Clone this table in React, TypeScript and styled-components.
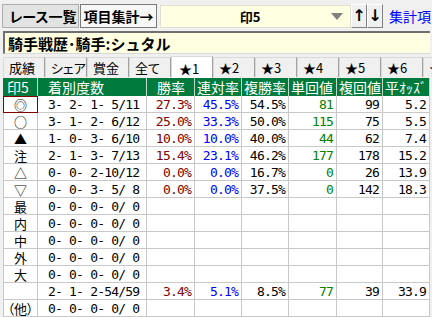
import React from 'react';
import styled, { createGlobalStyle } from 'styled-components';

const GlobalStyle = createGlobalStyle`
  html, body {
    margin: 0;
    padding: 0;
    background: #f0f0f0;
  }
  body {
    font-family: "Noto Sans CJK JP", "DejaVu Sans", sans-serif;
  }
`;

type Row = {
  mark: string;
  count: string;
  win?: string;
  ren?: string;
  fuku?: string;
  tan?: string;
  fukuKai?: string;
  odds?: string;
};

const rows: Row[] = [
  { mark: '◎', count: '3- 2- 1- 5/11', win: '27.3%', ren: '45.5%', fuku: '54.5%', tan: '81', fukuKai: '99', odds: '5.2' },
  { mark: '○', count: '3- 1- 2- 6/12', win: '25.0%', ren: '33.3%', fuku: '50.0%', tan: '115', fukuKai: '75', odds: '5.5' },
  { mark: '▲', count: '1- 0- 3- 6/10', win: '10.0%', ren: '10.0%', fuku: '40.0%', tan: '44', fukuKai: '62', odds: '7.4' },
  { mark: '注', count: '2- 1- 3- 7/13', win: '15.4%', ren: '23.1%', fuku: '46.2%', tan: '177', fukuKai: '178', odds: '15.2' },
  { mark: '△', count: '0- 0- 2-10/12', win: '0.0%', ren: '0.0%', fuku: '16.7%', tan: '0', fukuKai: '26', odds: '13.9' },
  { mark: '▽', count: '0- 0- 3- 5/ 8', win: '0.0%', ren: '0.0%', fuku: '37.5%', tan: '0', fukuKai: '142', odds: '18.3' },
  { mark: '最', count: '0- 0- 0- 0/ 0' },
  { mark: '内', count: '0- 0- 0- 0/ 0' },
  { mark: '中', count: '0- 0- 0- 0/ 0' },
  { mark: '外', count: '0- 0- 0- 0/ 0' },
  { mark: '大', count: '0- 0- 0- 0/ 0' },
  { mark: '', count: '2- 1- 2-54/59', win: '3.4%', ren: '5.1%', fuku: '8.5%', tan: '77', fukuKai: '39', odds: '33.9' },
  { mark: '（他）', count: '0- 0- 0- 0/ 0' },
];

const tabs = ['成績', 'シェア', '賞金', '全て', '★1', '★2', '★3', '★4', '★5', '★6', '★'];
// header label and its left padding
const heads: [string, number][] = [
  ['印5', 4],
  ['着別度数', 10],
  ['勝率', 10],
  ['連対率', 2],
  ['複勝率', 2],
  ['単回値', 2],
  ['複回値', 2],
  ['平ｵｯｽﾞ', 2],
];

const App: React.FC = () => (
  <Screen>
    <GlobalStyle />
    <Toolbar>
      <ToolButton>レース一覧</ToolButton>
      <ToolButton pressed>項目集計→</ToolButton>
      <Combo>
        <ComboText>印5</ComboText>
        <ComboArrow />
      </Combo>
      <ArrowButton>↑</ArrowButton>
      <ArrowButton>↓</ArrowButton>
      <LinkText>集計項目</LinkText>
    </Toolbar>
    <TitleBox>騎手戦歴･騎手:シュタル</TitleBox>
    <TabStrip>
      {tabs.map((t, i) => (
        <Tab key={i} active={i === 4}>{t}</Tab>
      ))}
    </TabStrip>
    <Grid>
      {heads.map(([h, pad]) => (
        <HeadCell key={h} pad={pad}>{h}</HeadCell>
      ))}
      {rows.map((r, i) => (
        <React.Fragment key={i}>
          <MarkCell selected={i === 0}>{r.mark}</MarkCell>
          <CountCell>{r.count}</CountCell>
          <NumCell color="#800000">{r.win}</NumCell>
          <NumCell color="#0000ff">{r.ren}</NumCell>
          <NumCell>{r.fuku}</NumCell>
          <NumCell color="#008000">{r.tan}</NumCell>
          <NumCell>{r.fukuKai}</NumCell>
          <NumCell>{r.odds}</NumCell>
        </React.Fragment>
      ))}
    </Grid>
  </Screen>
);
export default App;

const Screen = styled.div`
  width: 432px;
  height: 317px;
  overflow: hidden;
  background: #f0f0f0;
`;

const Toolbar = styled.div`
  display: flex;
  align-items: center;
  height: 24px;
  padding: 4px 0 0 2px;
  & > * {
    flex-shrink: 0;
  }
`;

const ToolButton = styled.div<{ pressed?: boolean }>`
  box-sizing: border-box;
  width: 77px;
  height: 24px;
  margin-right: ${(p) => (p.pressed ? '3px' : '1px')};
  display: flex;
  align-items: center;
  justify-content: center;
  padding-left: ${(p) => (p.pressed ? '0' : '5px')};
  font-size: 14px;
  line-height: 1;
  font-weight: bold;
  font-feature-settings: "palt";
  color: #000;
  background: ${(p) => (p.pressed ? '#f7f7f7' : '#e3e3e3')};
  border: 1px solid ${(p) => (p.pressed ? '#7a7a7a' : '#adadad')};
`;

const Combo = styled.div`
  box-sizing: border-box;
  width: 191px;
  height: 23px;
  display: flex;
  align-items: center;
  background: #ffffe1;
  border: 1px solid #e0e0d0;
`;

const ComboText = styled.div`
  flex: 1;
  text-align: center;
  font-size: 13px;
  line-height: 1;
  font-weight: bold;
  padding-left: 8px;
`;

const ComboArrow = styled.div`
  width: 0;
  height: 0;
  margin-right: 7px;
  border-left: 6px solid transparent;
  border-right: 6px solid transparent;
  border-top: 7px solid #808080;
`;

const ArrowButton = styled.div`
  box-sizing: border-box;
  width: 16px;
  height: 24px;
  display: flex;
  align-items: center;
  justify-content: center;
  font-family: "DejaVu Sans", sans-serif;
  font-size: 16px;
  line-height: 1;
  font-weight: bold;
  background: #f0f0f0;
  border-top: 1px solid #ffffff;
  border-left: 1px solid #ffffff;
  border-right: 1px solid #808080;
  border-bottom: 1px solid #808080;
`;

const LinkText = styled.div`
  margin-left: 6px;
  font-size: 14px;
  line-height: 1;
  color: #0000ff;
  white-space: nowrap;
`;

const TitleBox = styled.div`
  box-sizing: border-box;
  margin: 3px 2px 0 3px;
  height: 23px;
  padding: 0 0 0 3px;
  display: flex;
  align-items: center;
  background: #ffffe1;
  border-top: 2px solid #707070;
  border-left: 2px solid #707070;
  border-bottom: 1px solid #d8d8d8;
  font-size: 15px;
  line-height: 1;
  font-weight: bold;
  color: #000;
  white-space: nowrap;
`;

const TabStrip = styled.div`
  display: flex;
  align-items: flex-end;
  height: 24px;
  padding-left: 3px;
  overflow: hidden;
`;

const Tab = styled.div<{ active?: boolean }>`
  box-sizing: border-box;
  flex: 0 0 42px;
  height: ${(p) => (p.active ? '23px' : '20px')};
  margin-bottom: ${(p) => (p.active ? '-1px' : '1px')};
  display: flex;
  align-items: center;
  padding-left: ${(p) => (p.active ? '7px' : '5px')};
  font-size: 13px;
  line-height: 1;
  font-feature-settings: "palt";
  color: #000;
  background: ${(p) => (p.active ? '#ffffff' : '#f0f0f0')};
  border: 1px solid #d9d9d9;
  border-bottom: none;
  border-right: 1px solid #a0a0a0;
  white-space: nowrap;
  overflow: hidden;
`;

const Grid = styled.div`
  display: grid;
  grid-template-columns: 35px 109px 48px 47px 47px 48px 46px 47px;
  grid-template-rows: 18px;
  grid-auto-rows: 17px;
  margin-left: 3px;
  width: 427px;
  background: #ffffff;
`;

const HeadCell = styled.div<{ pad: number }>`
  box-sizing: border-box;
  display: flex;
  align-items: center;
  padding-left: ${(p) => p.pad}px;
  background: #007a3d;
  color: #ffffff;
  font-size: 14px;
  line-height: 1;
  border-right: 1px solid #c0d8c8;
  white-space: nowrap;
  overflow: hidden;
`;

const BodyCell = styled.div`
  box-sizing: border-box;
  display: flex;
  align-items: center;
  line-height: 1;
  border-right: 1px solid #c8c8c8;
  border-bottom: 1px solid #c8c8c8;
  white-space: pre;
  overflow: hidden;
`;

const MarkCell = styled(BodyCell)<{ selected?: boolean }>`
  justify-content: center;
  font-size: 13px;
  font-feature-settings: "palt";
  border-left: 1px solid #c8c8c8;
  ${(p) => (p.selected ? 'border: 1px solid #800000;' : '')}
`;

const CountCell = styled(BodyCell)`
  padding-left: 10px;
  font-family: "DejaVu Sans Mono", monospace;
  font-size: 13px;
  letter-spacing: -0.8px;
`;

const NumCell = styled(BodyCell)<{ color?: string }>`
  justify-content: flex-end;
  padding-right: 3px;
  font-family: "DejaVu Sans Mono", monospace;
  font-size: 13px;
  letter-spacing: -0.8px;
  color: ${(p) => p.color || '#000000'};
`;
